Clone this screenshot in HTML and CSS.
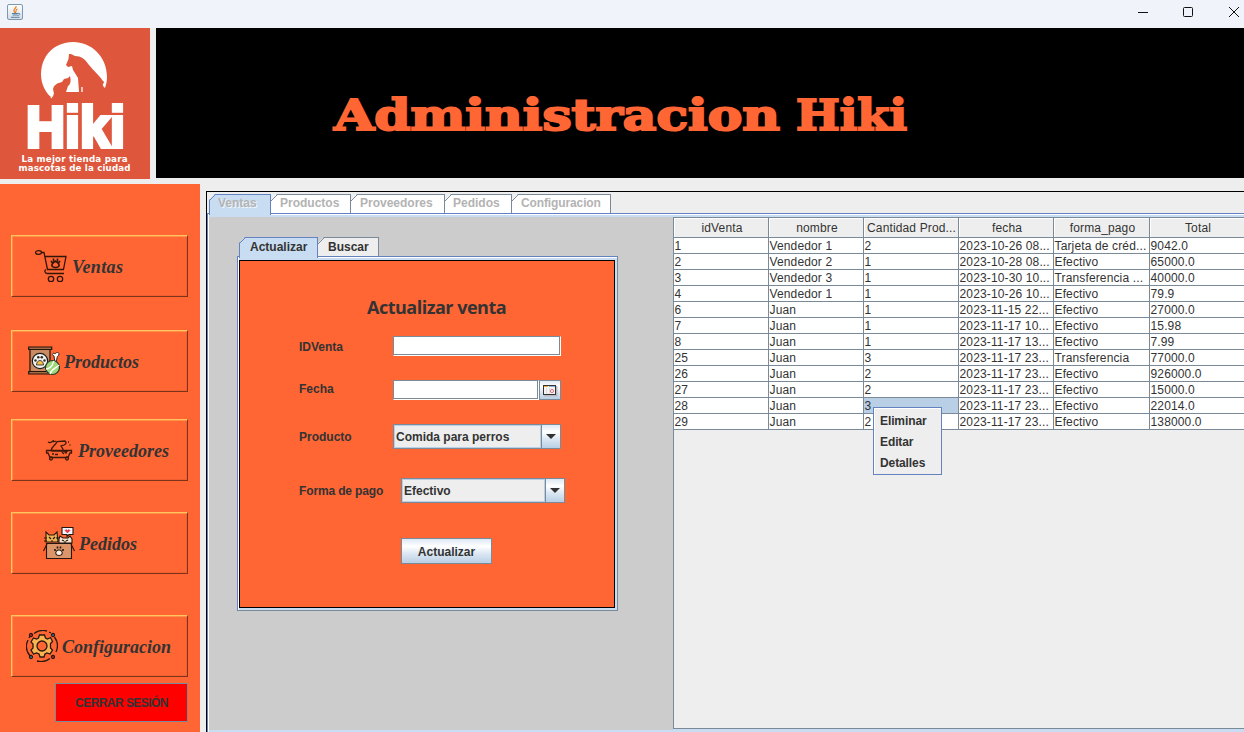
FILE: index.html
```
<!DOCTYPE html>
<html lang="es">
<head>
<meta charset="utf-8">
<title>Administracion Hiki</title>
<link rel="stylesheet" href="styles.css">
</head>
<body>
<header class="titlebar">
  <svg class="java" width="16" height="16" viewBox="0 0 16 16"><defs><linearGradient id="jg" x2="0" y2="1"><stop offset="0" stop-color="#fff"/><stop offset="1" stop-color="#d3dce5"/></linearGradient></defs><rect x=".5" y=".5" width="15" height="15" rx="1.5" fill="url(#jg)" stroke="#7c99b1"/><path d="M9 2C10 4 6 5 7 7l1 2M10.500 5C8 6 9.500 7 8.500 9" fill="none" stroke="#e8821e" stroke-width="1.200"/><path d="M5 9.500h6M5.500 11h5M4 13.300h8.500M11 9.500c3-.5 2 2-.5 2" fill="none" stroke="#5580a4"/></svg>
  <svg class="winbtns" width="110" height="28" viewBox="0 0 110 28" fill="none" stroke="#111" stroke-width="1"><path d="M4 12.500h10"/><rect x="49.500" y="7.500" width="9" height="9" rx="1"/><path d="M95 7l10 10M105 7L95 17"/></svg>
</header>
<div class="banner">
  <svg class="logo" width="150" height="151" viewBox="0 0 150 151"><rect width="150" height="151" fill="#de573c"/>
    <path d="M51 69C36 56 38 28 57 18c23-12 50 4 50 31 0 4-1 8-2 11l-2-2 1-4c-6-8-11-12-15-17-4-6-8-9-14-9l-4-2-2 0-.5 5-2.500 6 2 2 4-1 1 4 5 8 1 14H66l2-6c3-2 3-6 2-10l-2 2-4 1-2 3c-5 1-8 3-9 7l1 5z" fill="#fff"/>
    <path d="M82 59v5M102 52l4-2M103 57l3-3M51 61l-1 3M53 67l-2 3" fill="none" stroke="#fff" stroke-width="1.300"/>
    <text x="26" y="119" class="brand" textLength="99" lengthAdjust="spacingAndGlyphs">Hiki</text>
    <text x="21.500" y="134" class="slogan" textLength="106">La mejor tienda para</text>
    <text x="18.500" y="143" class="slogan" textLength="112">mascotas de la ciudad</text>
  </svg>
  <div class="headline"><svg width="1088" height="150" viewBox="156 28 1088 150"><text x="334" y="129.500" class="bigtitle" textLength="446" lengthAdjust="spacingAndGlyphs">Administracion</text><text x="796" y="129.500" class="bigtitle" textLength="111" lengthAdjust="spacingAndGlyphs">Hiki</text></svg></div>
</div>
<div class="body">
  <nav class="side">
    <button class="nav n1"><svg width="32" height="32" viewBox="0 0 32 32" fill="none" stroke="#321508" stroke-width="1.300"><ellipse cx="3.500" cy="2.500" rx="3" ry="1.800"/><path d="M6.500 2.500H9l3.500 17H29M11 19.500c-2 1-1 4 1 4h17M10 6.500h21l-2.500 13"/><circle cx="16" cy="29" r="2.700"/><circle cx="25" cy="29" r="2.700"/><path d="M17 16c-1-2 1-3 3.500-5 2.500 2 4.500 3 3.500 5-1 2-6 2-7 0zM16 11l1.500 2M25 11l-1.500 2M18.500 8.500v3M22.500 8.500v3" stroke-width="1.600"/></svg><span>Ventas</span></button>
    <button class="nav n2"><svg width="32" height="32" viewBox="0 0 32 32"><path d="M2 4h20v24H2z" fill="#c98b62" stroke="#311609" stroke-width="1.300"/><path d="M.7 2h23v2.500H.7zM.7 26.500h23V29H.7z" fill="#a86a42" stroke="#26150b" stroke-width="1.200"/><path d="M27 18l-1-7c-3-1-1-4 1-2 1-2 4-2 4 0s-2 2-2 4l-1 6" fill="#fff" stroke="#322"/><circle cx="12" cy="16" r="7.700" fill="#f2f2ee" stroke="#1c1c1c" stroke-width="1.200"/><path d="M8.500 20c0-3 2-4.500 3.500-4.500s3.500 1.500 3.500 4.500z" fill="#f5bf4b" stroke="#222" stroke-width=".8"/><g fill="#2c2b28"><circle cx="7.500" cy="15.500" r="1.200"/><circle cx="10.300" cy="12.300" r="1.300"/><circle cx="13.800" cy="12.300" r="1.300"/><circle cx="16.500" cy="15.500" r="1.200"/></g><circle cx="24.500" cy="22.500" r="7" fill="#9ed87d" stroke="#293b23" stroke-width="1.200"/><path d="M18 24c6 0 7-6 8-8M22 29c2-6 7-6 9-9" fill="none" stroke="#fff" stroke-width="1.300"/></svg><span>Productos</span></button>
    <button class="nav n3"><svg width="32" height="32" viewBox="0 0 32 32" fill="none" stroke="#3e180a" stroke-width="1.300"><path d="M4.500 16.500h25v2.500h-1.500l-2 4.500H8L6 19H4.500zM8 16l2 1h16M10 20h2M13 20.500h3"/><circle cx="9" cy="24.500" r="1.500"/><circle cx="25" cy="24.500" r="1.500"/><path d="M9.500 16c0-4 4-4 5.500-8.500l8-.5c2 2 1 3-1 4l-3 1c1 2 2 2 2 4M6 8c3 2 4-1 6-1.500M14 7l-3 1M26 8h1M27.500 11h1M21 16l3 3 1-3M20 18l2 2"/></svg><span>Proveedores</span></button>
    <button class="nav n4"><svg width="32" height="32" viewBox="0 0 32 32" stroke="#25170f" stroke-width="1.100"><path d="M3 15V5l3 3h5l3-3 1 10z" fill="#f1b452"/><path d="M16 16v-4l1-3 3 2h5l2-2 2 3v4z" fill="#f4e3cb"/><path d="M6 10l2 2M12 10l-2 2M8 14h2M1 11h3M1 14h3M13 11h3M19 13l2 1M25 13l-2 1M22 16v-2"/><path d="M19 .5h11v7h-4l-2 2v-2h-5z" fill="#eef8ff"/><path d="M24.500 6L22 3.500l1-1 1.500 1 1.500-1 1 1z" fill="#e93646" stroke="#e93646" stroke-width=".6"/><path d="M3.500 16.500h25v15h-25z" fill="#dc9469"/><path d="M4 17l-3.500 7M28 17l3.500 7"/><path d="M13 27c-1-2 1-4 3-4s4 2 3 4c-1 2-5 2-6 0z" fill="#fff1df"/><path d="M12 22v2M20 22v2M14.500 19.500v2M17.500 19.500v2" stroke-width="1.600"/></svg><span>Pedidos</span></button>
    <button class="nav n5"><svg width="32" height="32" viewBox="0 0 32 32" fill="none" stroke="#29180f" stroke-width="1.300"><path d="M8 3.500A15 15 0 0 1 21 1M23 2l2 1M28.500 7A15 15 0 0 1 30 22M24 28.500A15 15 0 0 1 11 31M4 26A15 15 0 0 1 2 10M3 8l1-2"/><path d="M13.500 5h5l1 3 2 1 3-1.500 2 4-2 2v4.500l2 2-2.500 4-3-1-2 1-1 3h-4l-1-3-2.500-1-3 1-2.500-4 2-2v-4l-2-2 2.500-4 3 1 2-1z" fill="#f8b451"/><circle cx="16" cy="16" r="5" fill="#f63"/><circle cx="5" cy="5" r="1.500" fill="#d34"/><circle cx="27" cy="5" r="1.500" fill="#28a9d5"/><circle cx="5" cy="27" r="1.500" fill="#28a9d5"/><circle cx="27" cy="27" r="1.500" fill="#d34"/></svg><span>Configuracion</span></button>
    <button class="logout">CERRAR SESIÓN</button>
  </nav>
  <main class="main">
    <div class="tabs">
      <div class="tab active t1"><svg width="8" height="8"><path d="M0 0h6L0 6z" fill="#eee"/><path d="M0 7L7 0" stroke="#6382bf"/></svg>Ventas</div>
      <div class="tab t2"><svg width="8" height="8"><path d="M0 0h6L0 6z" fill="#eee"/><path d="M0 7L7 0" stroke="#7a8a99"/></svg>Productos</div>
      <div class="tab t3"><svg width="8" height="8"><path d="M0 0h6L0 6z" fill="#eee"/><path d="M0 7L7 0" stroke="#7a8a99"/></svg>Proveedores</div>
      <div class="tab t4"><svg width="8" height="8"><path d="M0 0h6L0 6z" fill="#eee"/><path d="M0 7L7 0" stroke="#7a8a99"/></svg>Pedidos</div>
      <div class="tab t5"><svg width="8" height="8"><path d="M0 0h6L0 6z" fill="#eee"/><path d="M0 7L7 0" stroke="#7a8a99"/></svg>Configuracion</div>
    </div>
    <div class="pane">
      <section class="left">
        <div class="tabs inner">
          <div class="tab active i1"><svg width="8" height="8"><path d="M0 0h6L0 6z" fill="#ccc"/><path d="M0 7L7 0" stroke="#6382bf"/></svg>Actualizar</div>
          <div class="tab i2"><svg width="8" height="8"><path d="M0 0h6L0 6z" fill="#ccc"/><path d="M0 7L7 0" stroke="#7a8a99"/></svg>Buscar</div>
        </div>
        <div class="formpane"><form class="form">
          <h2>Actualizar venta</h2>
          <div class="row r1"><label>IDVenta</label><div class="input"></div></div>
          <div class="row r2"><label>Fecha</label><div class="input date"></div><div class="cal"><svg width="15" height="12" viewBox="0 0 15 12"><rect x="1" y="1" width="13.500" height="10.500" fill="#b9bcc2"/><rect x=".5" y=".5" width="12" height="9" fill="#f4f4f4" stroke="#333"/><path d="M1 1.500h4" stroke="#f3ad37"/><path d="M6 1.500h6" stroke="#8cb0e2"/><path d="M3.500 3v6M6.500 3v6" stroke="#ddd"/><circle cx="9" cy="6" r="1.600" fill="none" stroke="#e5707a"/></svg></div></div>
          <div class="row r3"><label>Producto</label><div class="combo"><span>Comida para perros</span><i><b></b></i></div></div>
          <div class="row r4"><label>Forma de pago</label><div class="combo"><span>Efectivo</span><i><b></b></i></div></div>
          <div class="submit">Actualizar</div>
        </form></div>
      </section>
      <section class="scroll">
        <table>
          <thead><tr><th>idVenta</th><th>nombre</th><th>Cantidad Prod...</th><th>fecha</th><th>forma_pago</th><th>Total</th></tr></thead>
          <tbody>
            <tr><td>1</td><td>Vendedor 1</td><td>2</td><td>2023-10-26 08...</td><td>Tarjeta de créd...</td><td>9042.0</td></tr>
            <tr><td>2</td><td>Vendedor 2</td><td>1</td><td>2023-10-28 08...</td><td>Efectivo</td><td>65000.0</td></tr>
            <tr><td>3</td><td>Vendedor 3</td><td>1</td><td>2023-10-30 10...</td><td>Transferencia ...</td><td>40000.0</td></tr>
            <tr><td>4</td><td>Vendedor 1</td><td>1</td><td>2023-10-26 10...</td><td>Efectivo</td><td>79.9</td></tr>
            <tr><td>6</td><td>Juan</td><td>1</td><td>2023-11-15 22...</td><td>Efectivo</td><td>27000.0</td></tr>
            <tr><td>7</td><td>Juan</td><td>1</td><td>2023-11-17 10...</td><td>Efectivo</td><td>15.98</td></tr>
            <tr><td>8</td><td>Juan</td><td>1</td><td>2023-11-17 13...</td><td>Efectivo</td><td>7.99</td></tr>
            <tr><td>25</td><td>Juan</td><td>3</td><td>2023-11-17 23...</td><td>Transferencia</td><td>77000.0</td></tr>
            <tr><td>26</td><td>Juan</td><td>2</td><td>2023-11-17 23...</td><td>Efectivo</td><td>926000.0</td></tr>
            <tr><td>27</td><td>Juan</td><td>2</td><td>2023-11-17 23...</td><td>Efectivo</td><td>15000.0</td></tr>
            <tr><td>28</td><td>Juan</td><td class="sel">3</td><td>2023-11-17 23...</td><td>Efectivo</td><td>22014.0</td></tr>
            <tr><td>29</td><td>Juan</td><td>2</td><td>2023-11-17 23...</td><td>Efectivo</td><td>138000.0</td></tr>
          </tbody>
        </table>
      </section>
    </div>
  </main>
</div>
<div class="popup"><div>Eliminar</div><div>Editar</div><div>Detalles</div></div>
</body>
</html>
```
FILE: styles.css
```
* { box-sizing: border-box; }
html, body { margin: 0; width: 1244px; height: 732px; overflow: hidden; }
body { position: relative; background: #eee; color: #333; font: bold 12px/14px "Liberation Sans", Arial, sans-serif; }
svg { display: block; flex: none; }
button { font: inherit; color: inherit; padding: 0; }
.titlebar { height: 28px; background: #f0f3fa; display: flex; justify-content: space-between; align-items: flex-start; padding-left: 7px; }
.java { margin-top: 4px; }
.banner { display: flex; gap: 6px; height: 156px; }
.brand { font: bold 57px "Liberation Sans", sans-serif; fill: #fff; stroke: #fff; stroke-width: 4px; }
.slogan { font: bold 8.7px "DejaVu Sans", sans-serif; fill: #fff; }
.headline { width: 1088px; height: 150px; background: #000; }
.bigtitle { font: bold 42px "DejaVu Serif", serif; fill: #f63; stroke: #f63; stroke-width: 2px; }
.body { display: flex; gap: 6px; height: 548px; }
.side { width: 200px; height: 548px; background: #f63; padding: 51px 12px 0 11px; display: flex; flex-direction: column; flex: none; }
.nav { flex: none; width: 177px; height: 62px; background: none; border: 1px solid; border-color: #ffc45e #7d3319 #7d3319 #ffc45e; box-shadow: inset 1px 1px #ff8e47, inset -1px -1px #f05f30; display: flex; align-items: center; gap: 4px; font: italic bold 18px/22px "Liberation Serif", serif; }
.nav span { padding-top: 1px; }
.n1 { padding-left: 23px; } .n2 { margin-top: 33px; padding-left: 16px; } .n3 { margin-top: 27px; padding-left: 30px; } .n4 { margin-top: 31px; padding-left: 31px; } .n5 { margin-top: 41px; padding-left: 14px; }
.n1 span { letter-spacing: .4px; padding-left: 1px; }
.logout { flex: none; margin: 6px 0 0 44px; width: 133px; height: 39px; background: red; border: 1px solid #7a8a99; letter-spacing: -.55px; }
.main { flex: 1; min-width: 0; margin-top: 7px; border: solid #000; border-width: 1px 0 0 1px; display: flex; flex-direction: column; }
.tabs { display: flex; height: 21px; padding: 2px 0 0 2px; flex: none; color: #b3b3b3; position: relative; }
.tab { position: relative; height: 19px; background: #fff; border: solid #7a8a99; border-width: 1px 1px 0 0; padding: 1px 0 0 9px; }
.tab svg { position: absolute; left: 0; top: -1px; }
.tab.active { background: #c8ddf2; border-color: #6382bf; height: 21px; box-shadow: inset 1px 0 #6382bf; text-shadow: 1px 1px #eef5fc; }
.t1 { width: 62px; } .t2 { width: 80px; } .t3 { width: 94px; } .t4 { width: 67px; padding-left: 8px; } .t5 { width: 99px; letter-spacing: -.12px; }
.pane { flex: 1; border: solid #6382bf; border-width: 1px 0 0 1px; box-shadow: inset 1px 1px #fff; padding: 3px 0 2px 1px; display: flex; background: #c8ddf2; }
.left { width: 464px; background: #ccc; padding: 20px 0 0 28px; flex: none; }
.inner { color: #333; height: 19px; padding: 0 0 0 2px; }
.inner .tab { background: #eee; height: 19px; padding-top: 2px; }
.inner .tab.active { background: #c8ddf2; height: 21px; padding-left: 11px; text-shadow: none; }
.i1 { width: 79px; } .i2 { width: 61px; padding-left: 10px; }
.formpane { width: 381px; height: 355px; border: 1px solid; border-color: #6382bf #7a8a99 #7a8a99 #6382bf; background: #c8ddf2; padding: 3px 2px 2px 1px; box-shadow: inset 1px 1px #fff; }
.form { height: 348px; border: 1px solid #000; background: #f63; padding-left: 59px; }
h2 { margin: 33px 0 0 68px; font: bold 18px/26px "Open Sans", sans-serif; height: 42px; letter-spacing: -.5px; }
.row { display: flex; }
.row label { width: 94px; padding-top: 4px; flex: none; }
.r1 { height: 44px; } .r2 { height: 44px; } .r3 { height: 54px; } .r4 { height: 60px; }
.r2 label { padding-top: 2px; } .r3 label, .r4 label { padding-top: 6px; }
.r4 label { width: 102px; letter-spacing: -.14px; }
.input { width: 168px; height: 20px; border: 1px solid; border-color: #7a8a99 #fff #fff #7a8a99; background: #fff; box-shadow: inset -1px -1px #7a8a99; }
.date { width: 146px; }
.cal, .combo i, .submit { background: linear-gradient(#dde8f3, #fff 30%, #dde8f3 60%, #b8cfe5); }
.cal { width: 22px; height: 20px; border: 1px solid #7a8a99; padding: 4px 0 0 3px; }
.combo { width: 168px; height: 25px; border: 1px solid #7a8a99; display: flex; }
.combo span { flex: 1; border: 1px solid #b8cfe5; background: #eee; padding: 4px 0 0 1px; }
.combo i { width: 19px; border-left: 1px solid #7a8a99; display: flex; align-items: center; justify-content: center; }
.combo b { border: 5px solid transparent; border-top-color: #333; border-bottom: 0; }
.r4 .combo { width: 164px; }
.submit { margin-left: 102px; width: 91px; height: 26px; border: 1px solid #7a8a99; line-height: 26px; text-align: center; }
.scroll { flex: 1; min-width: 0; background: #eee; border: solid #7a8a99; border-width: 1px 0 1px 1px; margin-bottom: 1px; overflow: hidden; }
table { width: 571px; table-layout: fixed; border-collapse: separate; border-spacing: 0; font-weight: normal; }
th, td { width: 95px; padding: 0; border: solid #7a8a99; border-width: 0 1px 1px 0; white-space: nowrap; overflow: hidden; letter-spacing: .14px; }
th:nth-child(5) { width: 96px; }
th { height: 20px; line-height: 18px; font-weight: normal; text-align: center; background: #eee; padding: 1px 0 0 2px; box-shadow: inset 1px 1px #fff; }
td { height: 16px; line-height: 14px; padding: 1px 0 0 .5px; background: #fff; }
th:nth-child(3) { padding-left: 1px; }
.sel { background: #b8cfe5; }
.popup { position: absolute; left: 873px; top: 407px; width: 69px; height: 68px; border: 1px solid #6382bf; background: #eee; box-shadow: inset 1px 1px #fff; padding: 3px 0 0 6px; line-height: 21px; letter-spacing: -.1px; }
```
